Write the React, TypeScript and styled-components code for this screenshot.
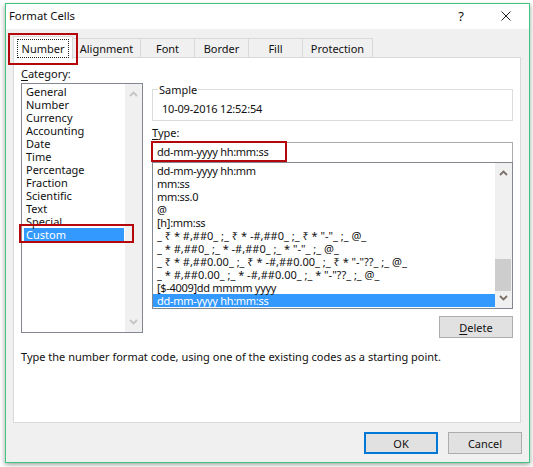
import React from "react";
import styled, { createGlobalStyle } from "styled-components";

const Global = createGlobalStyle`
  html, body { margin: 0; padding: 0; background: #fff; }
  body { width: 533px; height: 467px; overflow: hidden; }
`;

const Stage = styled.div`
  width: 533px;
  height: 467px;
  box-sizing: border-box;
  padding: 3px 3px 4px 5px;
  background: #fff;
`;

const Win = styled.div`
  position: relative;
  width: 525px;
  height: 460px;
  box-sizing: border-box;
  border: 1px solid #3ec67f;
  background: #f0f0f0;
  box-shadow: -2px 2px 4px rgba(0,0,0,.18), 2px 2px 4px rgba(0,0,0,.18);
  font-family: "Noto Sans", sans-serif;
  font-size: 11px;
  color: #111;
  display: flex;
  flex-direction: column;
`;

const TitleBar = styled.div`
  height: 25px;
  background: #fff;
  display: flex;
  align-items: center;
  padding: 0 0 2px 3px;
  box-sizing: border-box;
`;
const Title = styled.div`
  flex: 1;
  font-size: 11.3px;
`;
const Help = styled.div`
  width: 12px;
  font-size: 13px;
  text-align: center;
  margin-right: 34px;
`;
const Close = styled.svg`
  width: 10px;
  height: 10px;
  margin-right: 18px;
`;

const Tabs = styled.div`
  display: flex;
  height: 20px;
  margin: 9px 0 0 7px;
  align-items: flex-end;
  position: relative;
  z-index: 1;
`;
const Tab = styled.div<{ $w: number; $active?: boolean }>`
  width: ${(p) => p.$w}px;
  height: ${(p) => (p.$active ? 23 : 20)}px;
  box-sizing: border-box;
  border: 1px solid #d9d9d9;
  border-left-width: ${(p) => (p.$active ? 1 : 0)}px;
  border-bottom: ${(p) => (p.$active ? "0" : "1px solid #d9d9d9")};
  background: ${(p) => (p.$active ? "#fff" : "#f0f0f0")};
  display: flex;
  align-items: center;
  justify-content: center;
  margin-bottom: ${(p) => (p.$active ? -1 : 0)}px;
`;
const Focus = styled.span`
  outline: 1px dotted #222;
  padding: 2px 4px;
  line-height: 13px;
`;

const Panel = styled.div`
  margin: -1px 8px 0 7px;
  height: 366px;
  box-sizing: border-box;
  background: #fff;
  border: 1px solid #d9d9d9;
  padding: 9px 7px 0 7px;
  display: flex;
  flex-direction: column;
`;
const Columns = styled.div`
  display: flex;
  gap: 9px;
  align-items: flex-start;
`;
const LeftCol = styled.div`
  width: 122px;
  height: 266px;
  display: flex;
  flex-direction: column;
`;
const RightCol = styled.div`
  width: 361px;
  display: flex;
  flex-direction: column;
`;
const Label = styled.div`
  height: 15px;
  line-height: 14px;
`;
const U = styled.span`
  text-decoration: underline;
  text-underline-offset: 2px;
`;
const CatList = styled.div`
  flex: 1;
  box-sizing: border-box;
  border: 1px solid #828790;
  margin-top: 1px;
  display: flex;
  overflow: hidden;
`;
const Rows = styled.div`
  flex: 1;
  min-width: 0;
  overflow: hidden;
`;
const CatRow = styled.div<{ $sel?: boolean }>`
  height: 13px;
  line-height: 13px;
  padding-left: ${(p) => (p.$sel ? 2 : 4)}px;
  margin-right: ${(p) => (p.$sel ? 1 : 0)}px;
  margin-left: ${(p) => (p.$sel ? 2 : 0)}px;
  white-space: nowrap;
  background: ${(p) => (p.$sel ? "#3399ff" : "transparent")};
  color: ${(p) => (p.$sel ? "#fff" : "#111")};
  &:first-child { margin-top: 1px; }
`;
const ScrollBar = styled.div`
  width: 17px;
  background: #f0f0f0;
  display: flex;
  flex-direction: column;
  justify-content: space-between;
  align-items: center;
  position: relative;
`;
const Arrow = styled.svg`
  width: 9px;
  height: 6px;
  margin: 7px 0;
  flex: none;
`;
const Thumb = styled.div`
  position: absolute;
  left: 0;
  right: 1px;
  bottom: 17px;
  height: 32px;
  background: #cdcdcd;
`;
const SampleBox = styled.fieldset`
  margin: 16px 0 0;
  padding: 0 0 0 9px;
  height: 38px;
  box-sizing: border-box;
  border: 1px solid #dcdcdc;
  min-width: 0;
`;
const Legend = styled.legend`
  padding: 0 1px;
  margin-left: -4px;
  line-height: 13px;
`;
const SampleVal = styled.div`
  line-height: 14px;
  margin-top: 6px;
  letter-spacing: -0.2px;
`;
const TypeLabel = styled(Label)`
  height: 16px;
  margin-top: 5px;
`;
const TypeInput = styled.div`
  height: 21px;
  box-sizing: border-box;
  border: 1px solid #ababab;
  line-height: 18px;
  padding-left: 4px;
  flex: none;
  letter-spacing: -0.3px;
`;
const FmtList = styled.div`
  height: 147px;
  flex: none;
  box-sizing: border-box;
  border: 1px solid #828790;
  display: flex;
  margin-top: -1px;
`;
const FmtRow = styled.div<{ $sel?: boolean; $tight?: boolean }>`
  height: 13px;
  line-height: 13px;
  padding-left: 4px;
  white-space: nowrap;
  letter-spacing: ${(p) => (p.$tight ? "-0.3px" : "0")};
  background: ${(p) => (p.$sel ? "#3399ff" : "transparent")};
  color: ${(p) => (p.$sel ? "#fff" : "#111")};
  &:first-child { margin-top: 1px; }
`;
const DeleteWrap = styled.div`
  display: flex;
  justify-content: flex-end;
  margin-top: 7px;
`;
const Btn = styled.div<{ $def?: boolean }>`
  width: 74px;
  height: 22px;
  box-sizing: border-box;
  background: #e1e1e1;
  border: ${(p) => (p.$def ? "2px solid #0078d7" : "1px solid #adadad")};
  display: flex;
  align-items: center;
  justify-content: center;
`;
const Desc = styled.div`
  margin-top: 12px;
  line-height: 14px;
  white-space: nowrap;
`;
const Footer = styled.div`
  display: flex;
  justify-content: flex-end;
  gap: 10px;
  padding: 9px 7px 0 0;
`;
const Mark = styled.div<{ $l: number; $t: number; $w: number; $h: number }>`
  position: absolute;
  left: ${(p) => p.$l}px;
  top: ${(p) => p.$t}px;
  width: ${(p) => p.$w}px;
  height: ${(p) => p.$h}px;
  box-sizing: border-box;
  border: 2px solid #b5060c;
  z-index: 5;
  pointer-events: none;
`;

const Up = () => (
  <Arrow viewBox="0 0 9 6"><path d="M1 5 L4.5 1.5 L8 5" fill="none" stroke="#7a6f68" strokeWidth="1.8" /></Arrow>
);
const Down = () => (
  <Arrow viewBox="0 0 9 6"><path d="M1 1 L4.5 4.5 L8 1" fill="none" stroke="#7a6f68" strokeWidth="1.8" /></Arrow>
);
const PaleUp = () => (
  <Arrow viewBox="0 0 9 6"><path d="M1 5 L4.5 1.5 L8 5" fill="none" stroke="#c4c4c4" strokeWidth="1.8" /></Arrow>
);
const PaleDown = () => (
  <Arrow viewBox="0 0 9 6"><path d="M1 1 L4.5 4.5 L8 1" fill="none" stroke="#c4c4c4" strokeWidth="1.8" /></Arrow>
);

const cats = ["General","Number","Currency","Accounting","Date","Time","Percentage","Fraction","Scientific","Text","Special"];
const fmts = [
  { t: "dd-mm-yyyy hh:mm", tight: true },
  { t: "mm:ss", tight: true },
  { t: "mm:ss.0", tight: true },
  { t: "@", tight: false },
  { t: "[h]:mm:ss", tight: true },
  { t: '_ ₹ * #,##0_ ;_ ₹ * -#,##0_ ;_ ₹ * "-"_ ;_ @_', tight: false },
  { t: '_ * #,##0_ ;_ * -#,##0_ ;_ * "-"_ ;_ @_', tight: false },
  { t: '_ ₹ * #,##0.00_ ;_ ₹ * -#,##0.00_ ;_ ₹ * "-"??_ ;_ @_', tight: false },
  { t: '_ * #,##0.00_ ;_ * -#,##0.00_ ;_ * "-"??_ ;_ @_', tight: false },
  { t: "[$-4009]dd mmmm yyyy", tight: true },
];

export default function App() {
  return (
    <Stage>
      <Global />
      <Win>
        <TitleBar>
          <Title>Format Cells</Title>
          <Help>?</Help>
          <Close viewBox="0 0 10 10"><path d="M.5.5l9 9M9.5.5l-9 9" stroke="#222" strokeWidth="1" fill="none" /></Close>
        </TitleBar>
        <Tabs>
          <Tab $w={60} $active><Focus>Number</Focus></Tab>
          <Tab $w={68}>Alignment</Tab>
          <Tab $w={54}>Font</Tab>
          <Tab $w={54}>Border</Tab>
          <Tab $w={54}>Fill</Tab>
          <Tab $w={70}>Protection</Tab>
        </Tabs>
        <Panel>
          <Columns>
            <LeftCol>
              <Label><U>C</U>ategory:</Label>
              <CatList>
                <Rows>
                  {cats.map((c) => <CatRow key={c}>{c}</CatRow>)}
                  <CatRow $sel>Custom</CatRow>
                </Rows>
                <ScrollBar><PaleUp /><PaleDown /></ScrollBar>
              </CatList>
            </LeftCol>
            <RightCol>
              <SampleBox>
                <Legend>Sample</Legend>
                <SampleVal>10-09-2016 12:52:54</SampleVal>
              </SampleBox>
              <TypeLabel><U>T</U>ype:</TypeLabel>
              <TypeInput>dd-mm-yyyy hh:mm:ss</TypeInput>
              <FmtList>
                <Rows>
                  {fmts.map((f) => <FmtRow key={f.t} $tight={f.tight}>{f.t}</FmtRow>)}
                  <FmtRow $sel $tight>dd-mm-yyyy hh:mm:ss</FmtRow>
                </Rows>
                <ScrollBar><Up /><Thumb /><Down /></ScrollBar>
              </FmtList>
              <DeleteWrap><Btn><U>D</U>elete</Btn></DeleteWrap>
            </RightCol>
          </Columns>
          <Desc>Type the number format code, using one of the existing codes as a starting point.</Desc>
        </Panel>
        <Footer>
          <Btn $def>OK</Btn>
          <Btn>Cancel</Btn>
        </Footer>
        <Mark $l={2} $t={29} $w={70} $h={32} />
        <Mark $l={13} $t={220} $w={115} $h={19} />
        <Mark $l={145} $t={137} $w={136} $h={21} />
      </Win>
    </Stage>
  );
}
